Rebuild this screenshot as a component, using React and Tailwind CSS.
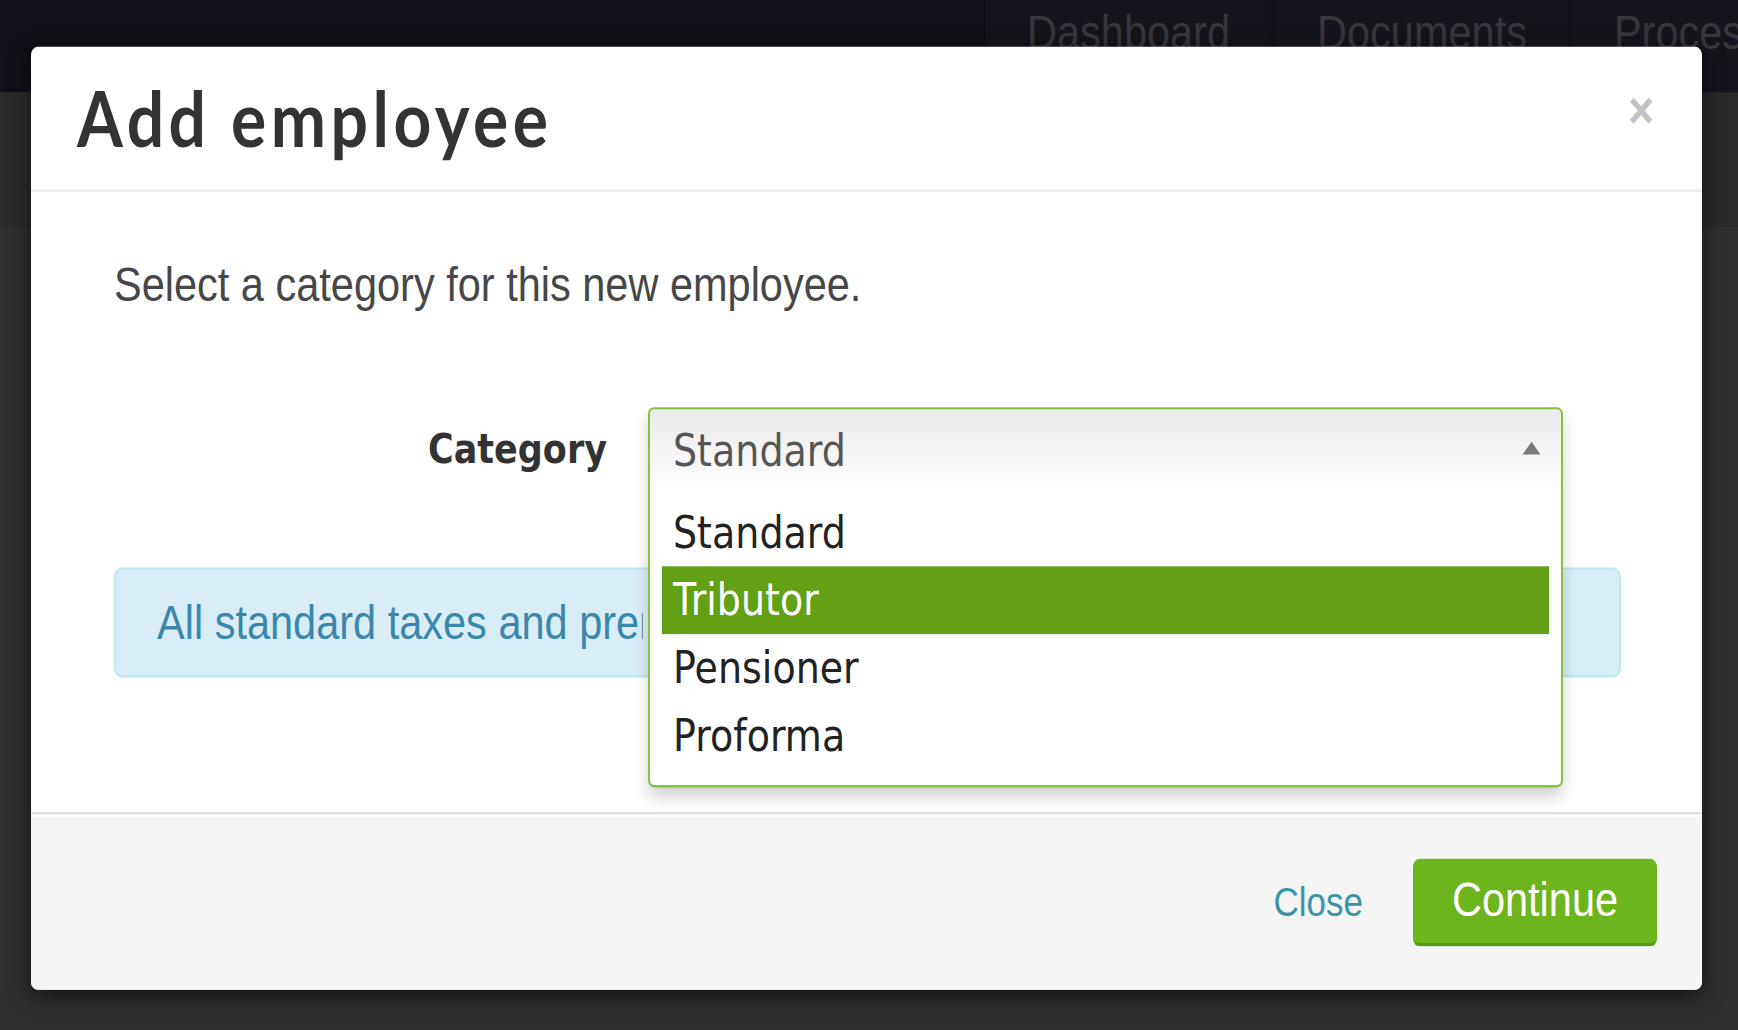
import React from "react";

const arial = "font-['Liberation_Sans',Arial,sans-serif]";
const verdana = "font-['DejaVu_Sans',Verdana,sans-serif]";

const OPTIONS = ["Standard", "Tributor", "Pensioner", "Proforma"];

function NavTabs() {
  return (
    <div className="flex h-[79px] gap-[5px] overflow-hidden bg-[#111019] pl-[986px]">
      {["Dashboard", "Documents", "Processing"].map((t) => (
        <div
          key={t}
          className={`flex h-full shrink-0 items-start bg-[#16151e] px-[41px] pt-[6px] text-[41.5px] leading-[44px] text-[#38373d] ${arial}`}
        >
          {t}
        </div>
      ))}
    </div>
  );
}

function CategorySelect({ value, highlighted }) {
  return (
    <div className="relative h-[72px] w-[915px]">
      <div className="absolute inset-x-0 top-0 z-10 overflow-hidden rounded-[6px] border-2 border-[#86c440] bg-white shadow-[0_8px_14px_rgba(0,0,0,0.18)]">
        {/* current value */}
        <div className="flex h-[70px] items-center justify-between bg-linear-to-b from-[#eaeaea] to-white pl-[23px] pr-[20px]">
          <span className={`text-[38px] text-[#555] ${verdana}`}>{value}</span>
          <svg width="19" height="12" viewBox="0 0 19 12" className="mb-[4px]">
            <polygon points="9.5,0.5 18.5,11.5 0.5,11.5" fill="#7a7a7a" />
          </svg>
        </div>
        {/* open list */}
        <ul className="px-[12px] pb-[13px] pt-[6px]">
          {OPTIONS.map((opt) => (
            <li
              key={opt}
              className={`flex h-[58px] items-center pl-[11px] text-[38px] ${verdana} ${
                opt === highlighted ? "bg-[#62a016] text-white" : "text-[#222]"
              }`}
            >
              {opt}
            </li>
          ))}
        </ul>
      </div>
    </div>
  );
}

export default function App() {
  return (
    <div className="h-[1030px] overflow-hidden bg-[#2f2f2f]">
      <div className="relative flex h-[881px] origin-top scale-y-[1.17] flex-col">
        <NavTabs />
        <div className="h-[115px] bg-[#2a2a2a]" />
        <div className="flex-1 bg-[#2f2f2f]" />

        {/* Modal */}
        <div className="absolute left-[31px] top-[40px] w-[1671px] overflow-hidden rounded-[7px] bg-white shadow-[0_5px_20px_rgba(0,0,0,0.6)]">
          {/* Header */}
          <div className="flex h-[124px] items-center justify-between border-b-2 border-[#ececec] pl-[46px] pr-[48px]">
            <h3 className="font-['Lato',sans-serif] text-[66px] font-bold leading-none tracking-[4.5px] text-[#333]">
              Add employee
            </h3>
            <button
              type="button"
              className={`mb-[14px] text-[44px] font-bold leading-none text-[#c2c2c2] ${arial}`}
            >
              ×
            </button>
          </div>

          {/* Body */}
          <div className="pb-[115px] pl-[83px] pr-[81px] pt-[55px]">
            <p className={`text-[41.5px] leading-[48px] text-[#474747] ${arial}`}>
              Select a category for this new employee.
            </p>

            <div className="mt-[81px] flex items-start">
              <label className={`w-[493px] text-right text-[35px] font-bold leading-[72px] text-[#333] ${verdana}`}>
                Category
              </label>
              <div className="ml-[41px]">
                <CategorySelect value="Standard" highlighted="Tributor" />
              </div>
            </div>

            <div className="mt-[65px] flex h-[94px] items-center whitespace-nowrap rounded-[8px] border-2 border-[#bce8f1] bg-[#d9edf7] px-[41px]">
              <span className={`w-[486px] overflow-hidden text-[41.5px] text-[#3a87ad] ${arial}`}>
                All standard taxes and premiums will be applied to this employee.
              </span>
            </div>
          </div>

          {/* Footer */}
          <div className="flex h-[152px] items-center justify-end gap-[50px] border-t-2 border-[#e2e2e2] bg-[#f5f5f5] pr-[45px] shadow-[inset_0_2px_0_#fff]">
            <a className={`text-[35px] text-[#3c93a6] ${arial}`}>Close</a>
            <button
              type="button"
              className={`h-[75px] w-[244px] rounded-[7px] border-b-[3px] border-[#5a9914] bg-[#6cb51c] text-[41.5px] text-white ${arial}`}
            >
              Continue
            </button>
          </div>
        </div>
      </div>
    </div>
  );
}
